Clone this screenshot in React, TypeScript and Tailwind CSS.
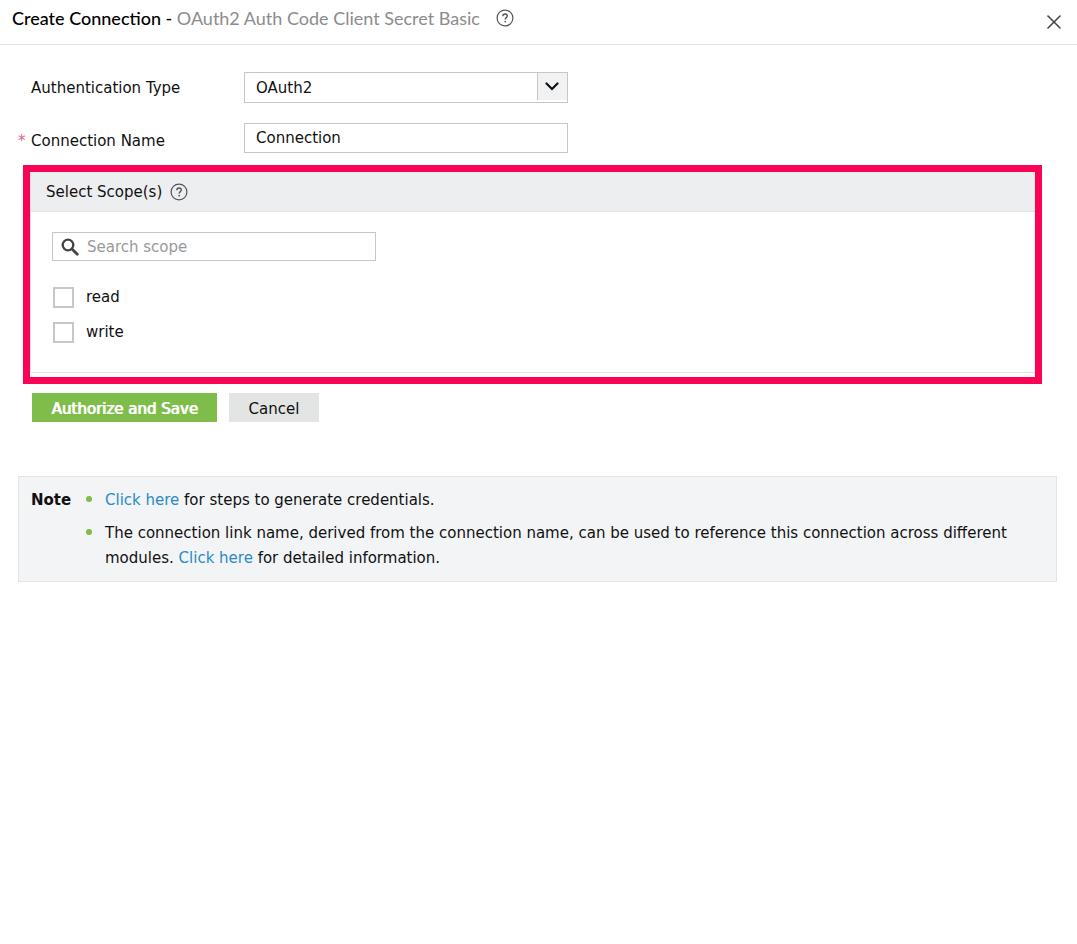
import { useState } from 'react'
import { X } from 'lucide-react'

const scopes = ['read', 'write']

function HelpIcon() {
  return (
    <svg viewBox="0 0 18 18" className="w-[18px] h-[18px] flex-shrink-0" fill="none" stroke="#555" aria-hidden="true">
      <circle cx="9" cy="9" r="7.9" strokeWidth="1.2" />
      <path d="M6.8 7.2c0-1.4 1-2.2 2.3-2.2s2.2.8 2.2 2c0 1.6-2.1 1.7-2.1 3.4" strokeWidth="1.4" />
      <circle cx="9.2" cy="12.6" r=".9" fill="#555" stroke="none" />
    </svg>
  )
}

function SearchIcon() {
  return (
    <svg viewBox="0 0 18 18" className="w-[18px] h-[18px] flex-shrink-0" fill="none" stroke="#444" aria-hidden="true">
      <circle cx="7" cy="7" r="5.3" strokeWidth="2.3" />
      <path d="M11 11l5.3 5.3" strokeWidth="2.8" strokeLinecap="round" />
    </svg>
  )
}

export default function App() {
  const [name, setName] = useState('Connection')
  const [search, setSearch] = useState('')
  const [selected, setSelected] = useState<string[]>([])

  const toggle = (scope: string) =>
    setSelected((s) => (s.includes(scope) ? s.filter((v) => v !== scope) : [...s, scope]))

  return (
    <div className="min-h-screen bg-white text-[15px] leading-6 text-[#111] font-['DejaVu_Sans',sans-serif]">
      {/* Header */}
      <header className="flex items-center justify-between h-[45px] pl-3 pr-[11px] border-b border-[#e2e2e2] font-['Lato',sans-serif]">
        <div className="flex items-center gap-4 pb-2">
          <h1 className="text-lg text-[#8c8c8c]">
            <span className="font-medium text-black">Create Connection - </span>
            OAuth2 Auth Code Client Secret Basic
          </h1>
          <button type="button" aria-label="Help">
            <HelpIcon />
          </button>
        </div>
        <button type="button" aria-label="Close">
          <X className="w-6 h-6 text-[#444]" strokeWidth={1.6} />
        </button>
      </header>

      <form className="pt-[27px]" onSubmit={(e) => e.preventDefault()}>
        <div className="flex items-center pl-[31px] mb-5">
          <label htmlFor="auth-type" className="w-[213px]">
            Authentication Type
          </label>
          <div className="relative w-[324px]">
            <select
              id="auth-type"
              className="block w-full h-[31px] pl-[11px] appearance-none bg-white border border-[#c4c6c8] focus:outline-none"
            >
              <option>OAuth2</option>
            </select>
            <span className="absolute top-px right-px w-[30px] h-[27px] pr-0.5 flex items-center justify-center bg-[#f0f2f3] border-l border-[#c4c6c8] pointer-events-none">
              <svg viewBox="0 0 14 9" className="w-3.5 h-[9px]" fill="none" stroke="#111" strokeWidth="2.2" aria-hidden="true">
                <path d="M1.5 1.5L7 7l5.5-5.5" strokeLinecap="round" />
              </svg>
            </span>
          </div>
        </div>

        <div className="flex items-end pl-[18px] mb-3">
          <label htmlFor="connection-name" className="flex w-[226px]">
            <span className="w-[13px] text-[#e0608a]">*</span>
            Connection Name
          </label>
          <input
            id="connection-name"
            type="text"
            value={name}
            onChange={(e) => setName(e.target.value)}
            className="w-[324px] h-[30px] px-[11px] border border-[#c4c6c8] focus:outline-none"
          />
        </div>

        {/* Scopes */}
        <section className="ml-[23px] mr-[35px] border-[7px] border-[#fb0354] pb-1">
          <div className="border-b border-l border-[#e0e2e3]">
            <div className="flex items-center gap-2 h-10 pl-[15px] bg-[#eceeef] border-b border-[#e0e2e3]">
              <h2>Select Scope(s)</h2>
              <button type="button" aria-label="About scopes">
                <HelpIcon />
              </button>
            </div>
            <div className="pt-5 pl-[21px] pb-7">
              <label className="flex items-center gap-2 w-[324px] h-[29px] px-2 border border-[#c4c6c8]">
                <SearchIcon />
                <input
                  type="text"
                  aria-label="Search scope"
                  placeholder="Search scope"
                  value={search}
                  onChange={(e) => setSearch(e.target.value)}
                  className="flex-1 min-w-0 bg-transparent placeholder-[#999] focus:outline-none"
                />
              </label>
              <div className="flex flex-col gap-[11px] mt-6 pl-px">
                {scopes
                  .filter((scope) => scope.includes(search))
                  .map((scope) => (
                    <label key={scope} className="flex items-center gap-3">
                      <input
                        type="checkbox"
                        checked={selected.includes(scope)}
                        onChange={() => toggle(scope)}
                        className="w-[21px] h-[21px] appearance-none bg-white border-2 border-[#c8c8c8] checked:bg-[#7fbd4b]"
                      />
                      {scope}
                    </label>
                  ))}
              </div>
            </div>
          </div>
        </section>

        <div className="flex gap-3 pl-8 mt-[9px]">
          <button type="submit" className="w-[185px] h-[29px] pt-0.5 bg-[#7fbd4b] text-white [text-shadow:1px_0_white]">
            Authorize and Save
          </button>
          <button type="button" className="w-[90px] h-[29px] pt-0.5 bg-[#e3e4e4]">
            Cancel
          </button>
        </div>
      </form>

      {/* Note */}
      <aside className="flex mt-[54px] ml-[18px] mr-5 pt-[11px] pb-2.5 pl-3 pr-4 bg-[#f2f4f5] border border-[#e3e5e6] leading-[25px]">
        <strong className="w-[55px]">Note</strong>
        <ul className="flex-1 flex flex-col gap-2">
          <li className="flex gap-[13px]">
            <span className="w-1.5 h-1.5 mt-2 rounded-full bg-[#7fbd4b] flex-shrink-0" />
            <p>
              <a href="#credentials" className="text-[#2b8bc8]">Click here</a> for steps to generate credentials.
            </p>
          </li>
          <li className="flex gap-[13px]">
            <span className="w-1.5 h-1.5 mt-2 rounded-full bg-[#7fbd4b] flex-shrink-0" />
            <p>
              The connection link name, derived from the connection name, can be used to reference this connection
              across different modules. <a href="#details" className="text-[#2b8bc8]">Click here</a> for detailed
              information.
            </p>
          </li>
        </ul>
      </aside>
    </div>
  )
}
